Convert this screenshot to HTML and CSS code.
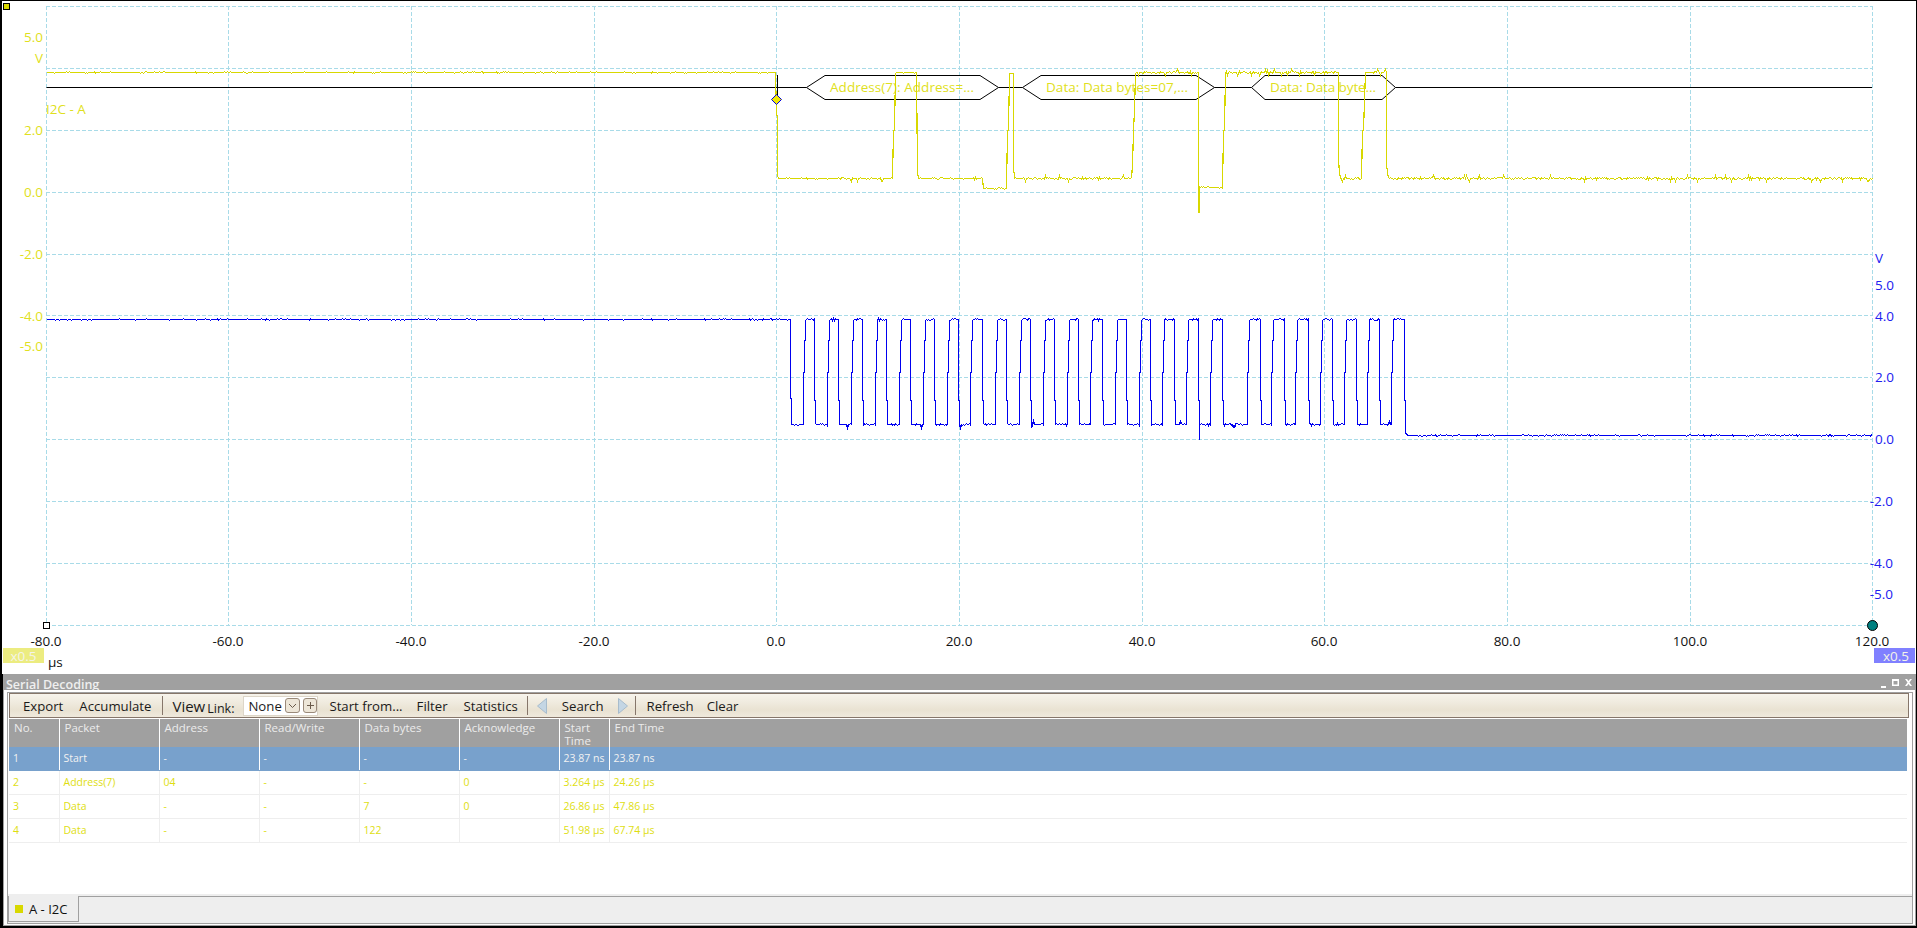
FILE: index.html
```html
<!DOCTYPE html>
<html lang="en">
  <head>
    <meta charset="UTF-8" />
    <title>Serial Decoding</title>
    <link rel="stylesheet" href="styles.css">
  </head>
  <body>
    <div class="frame">
      <svg class="plot" id="plot" width="1914" height="673" viewBox="2 1 1914 673">
        <g id="grid"></g>

        <text class="ch-a end" x="43" y="42">5.0</text>
        <text class="ch-a end" x="43" y="63">V</text>
        <text class="ch-a end" x="43" y="135">2.0</text>
        <text class="ch-a end" x="43" y="197">0.0</text>
        <text class="ch-a end" x="43" y="259">-2.0</text>
        <text class="ch-a end" x="43" y="321">-4.0</text>
        <text class="ch-a end" x="43" y="351">-5.0</text>
        <text class="ch-a" x="46" y="114">I2C - A</text>

        <text class="ch-b" x="1875" y="263">V</text>
        <text class="ch-b" x="1875" y="290">5.0</text>
        <text class="ch-b" x="1875" y="321">4.0</text>
        <text class="ch-b" x="1875" y="382">2.0</text>
        <text class="ch-b" x="1875" y="444">0.0</text>
        <text class="ch-b end" x="1893" y="506">-2.0</text>
        <text class="ch-b end" x="1893" y="568">-4.0</text>
        <text class="ch-b end" x="1893" y="599">-5.0</text>

        <g id="xlabels"></g>
        <text class="axis" x="48" y="667">µs</text>

        <g class="bus">
          <path d="M46.500 87.500H777.500M777.500 75V100" />
          <path d="M777.500 87.500H806.500L825 75.500H980L998.500 87.500L980 99.500H825L806.500 87.500" />
          <path d="M998.500 87.500H1022.500L1041 75.500H1196L1214.500 87.500L1196 99.500H1041L1022.500 87.500" />
          <path d="M1214.500 87.500H1251.500L1265 75.500H1382L1395.500 87.500L1382 99.500H1265L1251.500 87.500" />
          <path d="M1395.500 87.500H1872" />
        </g>
        <text class="ch-a bus-text" x="830" y="92" textLength="144">Address(7): Address=...</text>
        <text class="ch-a bus-text" x="1046" y="92" textLength="142">Data: Data bytes=07,...</text>
        <text class="ch-a bus-text" x="1270" y="92" textLength="106">Data: Data byte...</text>

        <path id="traceA" class="trace trace-a" />
        <path id="traceB" class="trace trace-b" />

        <path class="marker-diamond" d="M776.500 94.500L781.500 99.500L776.500 104.500L771.500 99.500Z" />
        <rect class="marker-trigger" x="3.500" y="3.500" width="6" height="6" />
        <rect class="marker-start" x="43.500" y="622.500" width="6" height="6" />
        <circle class="marker-end" cx="1872.500" cy="625.500" r="5" />

        <rect class="zoom-a" x="3" y="648" width="41" height="15" />
        <text class="zoom-text" x="23.500" y="661">x0.5</text>
        <rect class="zoom-b" x="1874" y="648" width="41" height="15" />
        <text class="zoom-text" x="1896" y="661">x0.5</text>
      </svg>

      <div class="panel">
        <div class="panel-title">
          <span class="panel-name">Serial Decoding</span>
          <svg class="panel-controls" width="36" height="10" viewBox="-2 0 36 10">
            <path d="M0 8H5V10H0Z" />
            <path d="M11 1H18V8H11ZM12.500 3V6.500H16.500V3Z" fill-rule="evenodd" />
            <path d="M24 1L26 1L27.500 3L29 1L31 1L28.500 4.500L31 8H29L27.500 6L26 8H24L26.500 4.500Z" />
          </svg>
        </div>
        <div class="panel-body">
          <div class="toolbar">
            <span class="tool tool-export">Export</span>
            <span class="tool tool-accumulate">Accumulate</span>
            <span class="sep sep-view"></span>
            <span class="tool tool-view">View</span>
            <span class="link-label">Link:</span>
            <div class="link-box">
              <span class="link-value">None</span>
              <span class="mini-btn">
                <svg width="9" height="6" viewBox="0 0 9 6"><path d="M1 1L4.500 4.500L8 1" /></svg>
              </span>
              <span class="mini-btn">
                <svg width="9" height="9" viewBox="0 0 9 9"><path d="M4.500 1V8M1 4.500H8" /></svg>
              </span>
            </div>
            <span class="tool tool-start">Start from...</span>
            <span class="tool tool-filter">Filter</span>
            <span class="tool tool-stats">Statistics</span>
            <span class="sep sep-stats"></span>
            <svg class="arrow arrow-left" width="10" height="16" viewBox="0 0 10 16"><path d="M9.500 .5V15.500L.5 8Z" /></svg>
            <span class="tool tool-search">Search</span>
            <svg class="arrow arrow-right" width="10" height="16" viewBox="0 0 10 16"><path d="M.5 .5V15.500L9.500 8Z" /></svg>
            <span class="sep sep-search"></span>
            <span class="tool tool-refresh">Refresh</span>
            <span class="tool tool-clear">Clear</span>
          </div>

          <div class="table-wrap">
            <table class="packets">
              <colgroup>
                <col class="w50" /><col class="w100" /><col class="w100" /><col class="w100" />
                <col class="w100" /><col class="w100" /><col class="w50" /><col class="w100" /><col />
              </colgroup>
              <thead>
                <tr>
                  <th>No.</th><th>Packet</th><th>Address</th><th>Read/Write</th>
                  <th>Data bytes</th><th>Acknowledge</th><th>Start<br />Time</th><th>End Time</th><th></th>
                </tr>
              </thead>
              <tbody>
                <tr class="selected">
                  <td>1</td><td>Start</td><td>-</td><td>-</td><td>-</td><td>-</td><td>23.87 ns</td><td>23.87 ns</td><td></td>
                </tr>
                <tr>
                  <td>2</td><td>Address(7)</td><td>04</td><td>-</td><td>-</td><td>0</td><td>3.264 µs</td><td>24.26 µs</td><td></td>
                </tr>
                <tr>
                  <td>3</td><td>Data</td><td>-</td><td>-</td><td>7</td><td>0</td><td>26.86 µs</td><td>47.86 µs</td><td></td>
                </tr>
                <tr>
                  <td>4</td><td>Data</td><td>-</td><td>-</td><td>122</td><td></td><td>51.98 µs</td><td>67.74 µs</td><td></td>
                </tr>
              </tbody>
            </table>
          </div>

          <div class="tabs">
            <div class="tab"><span class="tab-dot"></span>A - I2C</div>
          </div>
        </div>
      </div>
    </div>
    <script src="traces.js"></script>
  </body>
</html>
```

FILE: styles.css
```css
html,
body {
  margin: 0;
  padding: 0;
  width: 1917px;
  height: 928px;
  overflow: hidden;
  background-color: #000;
  font-family: "Open Sans", "Noto Sans", Arial, sans-serif;
}
.frame {
  box-sizing: border-box;
  width: 1917px;
  height: 928px;
  padding: 1px 1px 2px 2px;
  display: flex;
  flex-direction: column;
}
.plot {
  display: block;
  flex: none;
  background-color: #fff;
}
.grid-line {
  stroke: #a8dbe8;
  stroke-width: 1;
  stroke-dasharray: 4 2;
  shape-rendering: crispEdges;
}
.ch-a,
.ch-b,
.axis,
.zoom-text {
  font-size: 13.5px;
}
.ch-a {
  fill: #dfdf20;
}
.ch-b {
  fill: #2020f0;
}
.end {
  text-anchor: end;
}
.axis {
  fill: #111;
}
.axis-tick {
  text-anchor: middle;
}
.trace {
  fill: none;
  shape-rendering: crispEdges;
}
.trace-a {
  stroke: #d8d800;
  stroke-width: 1.2;
}
.trace-b {
  stroke: #0000f0;
  stroke-width: 1.4;
}
.bus path {
  fill: none;
  stroke: #000;
  stroke-width: 1;
}
.bus-text {
  font-size: 13.5px;
}
.marker-diamond {
  fill: #f0e800;
  stroke: #0000e0;
}
.marker-trigger {
  fill: #d8d800;
  stroke: #000;
  shape-rendering: crispEdges;
}
.marker-start {
  fill: #fff;
  stroke: #000;
  shape-rendering: crispEdges;
}
.marker-end {
  fill: #008080;
  stroke: #000;
}
.zoom-a {
  fill: #ecec80;
}
.zoom-b {
  fill: #8080ff;
}
.zoom-text {
  fill: #f4f4e8;
  text-anchor: middle;
}

.panel {
  flex: 1;
  min-height: 0;
  margin-left: 1px;
  background-color: #fff;
  border: 1px solid #a0a0a0;
  border-top-width: 2px;
  display: flex;
  flex-direction: column;
}
.panel-title {
  flex: none;
  height: 14px;
  background-color: #a0a0a0;
  overflow: hidden;
  display: flex;
  justify-content: space-between;
}
.panel-name {
  font-size: 12.5px;
  font-weight: 600;
  color: #efefef;
  line-height: 18px;
  padding-left: 2px;
}
.panel-controls {
  display: block;
  margin-top: 2px;
  fill: #fff;
}
.panel-body {
  flex: 1;
  min-height: 0;
  margin: 2px 2px 1px 3px;
  padding: 0 3px 0 1px;
  border: 1px solid #a0a0a0;
  display: flex;
  flex-direction: column;
  background-color: #fff;
}

.toolbar {
  flex: none;
  box-sizing: border-box;
  height: 25px;
  border: 1px solid #86766a;
  background: linear-gradient(#f7f4ec, #e9e2d2 70%, #efe9dc);
  display: flex;
  align-items: center;
  font-size: 13.2px;
  color: #1a1a1a;
  white-space: nowrap;
}
.tool-export {
  margin-left: 13px;
}
.tool-accumulate {
  margin-left: 16px;
}
.sep {
  flex: none;
  width: 1px;
  height: 19px;
  background-color: #86766a;
}
.sep-view {
  margin-left: 11px;
}
.tool-view {
  font-size: 15px;
  margin-left: 9px;
}
.link-label {
  align-self: flex-end;
  margin-left: 2px;
  font-size: 12.5px;
  line-height: 17px;
}
.link-box {
  box-sizing: border-box;
  flex: none;
  width: 75px;
  height: 20px;
  margin-left: 9px;
  background-color: #fff;
  border: 1px solid #ddd6c8;
  display: flex;
  align-items: center;
  gap: 3px;
}
.link-value {
  width: 38px;
  padding-left: 4px;
  box-sizing: border-box;
}
.mini-btn {
  box-sizing: border-box;
  width: 15px;
  height: 15px;
  border: 1px solid #9a8a7a;
  border-radius: 3px;
  background-color: #ede6d8;
  display: flex;
  align-items: center;
  justify-content: center;
}
.mini-btn svg {
  display: block;
  fill: none;
  stroke: #6a5a4a;
}
.tool-start {
  margin-left: 11px;
}
.tool-filter {
  margin-left: 14px;
}
.tool-stats {
  margin-left: 16px;
}
.sep-stats {
  margin-left: 9px;
}
.arrow {
  flex: none;
}
.arrow path {
  fill: #c4d6e4;
  stroke: #a8bccc;
}
.arrow-left {
  margin-left: 9px;
}
.tool-search {
  margin-left: 15px;
}
.arrow-right {
  margin-left: 14px;
}
.sep-search {
  margin-left: 7px;
}
.tool-refresh {
  margin-left: 11px;
}
.tool-clear {
  margin-left: 13px;
}

.table-wrap {
  flex: 1;
  min-height: 0;
  overflow: hidden;
  margin-right: 2px;
  padding-top: 1px;
}
.packets {
  width: 100%;
  table-layout: fixed;
  border-collapse: collapse;
  font-size: 10.5px;
}
.w50 {
  width: 50px;
}
.w100 {
  width: 100px;
}
.packets th {
  height: 28px;
  box-sizing: border-box;
  padding: 2px 0 0 5px;
  background-color: #a0a0a0;
  color: #ececec;
  font-size: 11.5px;
  font-weight: 400;
  text-align: left;
  vertical-align: top;
  line-height: 13px;
  white-space: nowrap;
  border-right: 1px solid #fff;
}
.packets th:nth-child(n + 8) {
  border-right: none;
}
.packets td {
  height: 24px;
  box-sizing: border-box;
  padding: 0 0 0 4px;
  color: #dede10;
  white-space: nowrap;
  border-right: 1px solid #eee;
  border-bottom: 1px solid #eee;
}
.packets td:nth-child(n + 8) {
  border-right: none;
}
.packets .selected td {
  height: 23px;
  background-color: #78a1cc;
  color: #f2f2f2;
  border-right-color: #fff;
  border-bottom-color: #78a1cc;
}
.packets .selected td:nth-child(n + 8) {
  border-right: none;
}

.tabs {
  flex: none;
  height: 29px;
  background-color: #eee;
  margin-left: -1px;
  margin-right: -3px;
  box-sizing: border-box;
  padding-top: 2px;
}
.tabs::before {
  content: "";
  display: block;
  height: 1px;
  margin-left: 70px;
  background-color: #a0a0a0;
}
.tab {
  box-sizing: border-box;
  width: 71px;
  height: 26px;
  margin-top: -1px;
  background-color: #eee;
  border: 1px solid #a0a0a0;
  border-top: none;
  display: flex;
  align-items: center;
  font-size: 13px;
  color: #111;
  padding-left: 6px;
  gap: 6px;
}
.tab-dot {
  width: 8px;
  height: 8px;
  background-color: #d8d800;
}
```

FILE: traces.js
```js
// draws the grid, the time labels and the two scope traces into the plot svg
const SVG_NS = "http://www.w3.org/2000/svg";
const gridX = [46, 228, 411, 594, 776, 959, 1142, 1324, 1507, 1690, 1872];
const gridY = [6, 68, 130, 192, 254, 315, 377, 439, 501, 563, 625];
const timeLabels = ["-80.0", "-60.0", "-40.0", "-20.0", "0.0", "20.0", "40.0", "60.0", "80.0", "100.0", "120.0"];

let seed = 7;
function rnd() {
  seed = (seed * 16807) % 2147483647;
  return seed / 2147483647;
}

function make(tag, attrs, parent) {
  const el = document.createElementNS(SVG_NS, tag);
  Object.keys(attrs).forEach((k) => el.setAttribute(k, attrs[k]));
  parent.appendChild(el);
  return el;
}

const grid = document.getElementById("grid");
gridX.forEach((x) => {
  make("line", { class: "grid-line", x1: x + 0.5, x2: x + 0.5, y1: 6, y2: 625 }, grid);
});
gridY.forEach((y) => {
  make("line", { class: "grid-line", x1: 46, x2: 1872, y1: y + 0.5, y2: y + 0.5 }, grid);
});

const xlabels = document.getElementById("xlabels");
gridX.forEach((x, i) => {
  const t = make("text", { class: "axis axis-tick", x: x, y: 646 }, xlabels);
  t.textContent = timeLabels[i];
});

// flat stretch of signal with a little noise
function flat(pts, x0, x1, y, amp, spike) {
  for (let x = x0; x <= x1; x++) {
    let d = 0;
    if (rnd() < amp) d = rnd() < 0.6 ? -1 : 1;
    if (rnd() < spike) d = rnd() < 0.5 ? -3 : 3;
    pts.push([x, y + d]);
  }
}

function toPath(pts) {
  return "M" + pts.map((p) => p[0] + 0.5 + " " + (p[1] + 0.5)).join("L");
}

// channel A
const a = [];
const aHigh = 72;
const aLow = 178;
flat(a, 46, 775, aHigh, 0.12, 0);
a.push([776, 115], [777, 115]);
flat(a, 777, 892, aLow, 0.2, 0.03);
a.push([893, 130], [894, 130], [895, aHigh + 1]);
flat(a, 896, 915, aHigh, 0.3, 0.05);
a.push([916, aHigh], [917, 172]);
flat(a, 918, 981, aLow, 0.2, 0.04);
a.push([982, aLow], [983, 188]);
flat(a, 983, 1006, 188, 0.15, 0);
a.push([1007, 130], [1008, 130], [1009, 73]);
flat(a, 1010, 1012, 73, 0, 0);
a.push([1013, 73], [1013, 172], [1014, 172]);
flat(a, 1014, 1131, aLow, 0.4, 0.05);
a.push([1132, 165], [1133, 130], [1134, 110], [1135, 73]);
flat(a, 1136, 1197, 72, 0.5, 0.08);
a.push([1198, 72], [1198, 212], [1199, 212], [1199, 186]);
flat(a, 1200, 1222, 187, 0.2, 0);
a.push([1223, 130], [1224, 130], [1225, 73]);
flat(a, 1226, 1337, 72, 0.5, 0.1);
a.push([1338, 72], [1338, 160], [1339, 172]);
flat(a, 1340, 1361, aLow, 0.4, 0.05);
a.push([1362, 130], [1363, 130], [1364, 100], [1365, 72]);
flat(a, 1366, 1385, 72, 0.4, 0.05);
a.push([1386, 72], [1386, 164], [1387, 172]);
flat(a, 1388, 1872, aLow, 0.45, 0.04);
document.getElementById("traceA").setAttribute("d", toPath(a));

// channel B, the clock
const bHigh = 319;
const bLow = 424;
const rises = [805, 829, 853, 877, 901, 925, 949, 972, 997, 1021, 1045, 1069, 1092, 1117, 1141, 1164, 1188, 1212, 1249, 1273, 1297, 1322, 1346, 1369, 1393];
const falls = [814, 838, 862, 886, 910, 934, 958, 982, 1006, 1030, 1054, 1078, 1102, 1126, 1150, 1174, 1198, 1222, 1260, 1284, 1308, 1332, 1356, 1379, 1404];
const b = [];
flat(b, 46, 789, bHigh, 0.12, 0);
b.push([790, bHigh], [790, 398], [791, 398]);
rises.forEach((r, i) => {
  const from = i === 0 ? 791 : falls[i - 1] + 1;
  if (from === 1199) b.push([1199, 439], [1199, bLow]);
  flat(b, from, r - 2, bLow, 0.35, 0.03);
  b.push([r - 2, bLow], [r - 2, 372], [r - 1, 372], [r - 1, 340], [r, 340], [r, 320]);
  flat(b, r + 1, falls[i] - 1, bHigh, 0.4, 0);
  b.push([falls[i], bHigh], [falls[i], 400], [falls[i] + 1, 400]);
});
flat(b, 1405, 1406, 433, 0, 0);
flat(b, 1407, 1872, 435, 0.2, 0);
document.getElementById("traceB").setAttribute("d", toPath(b));
```
